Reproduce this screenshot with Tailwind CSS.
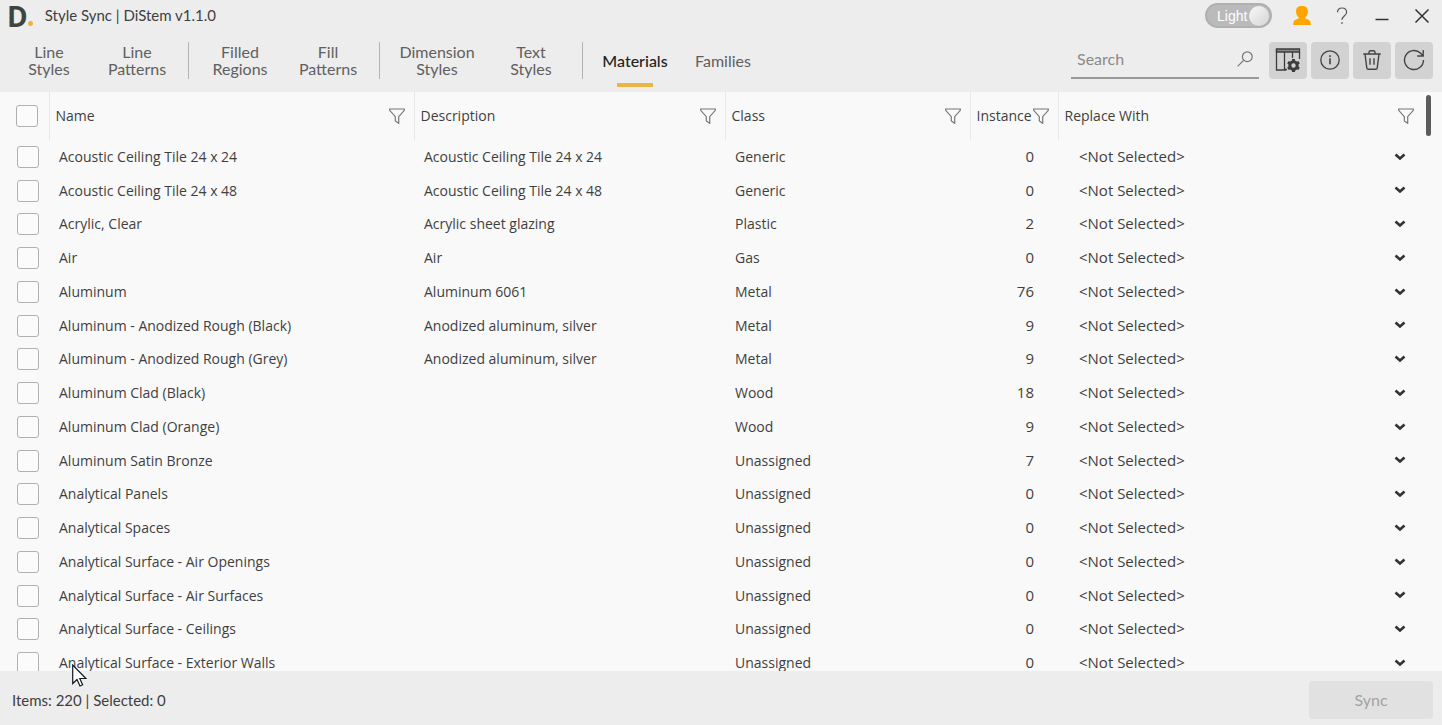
<!DOCTYPE html>
<html lang="en">
<head>
<meta charset="utf-8">
<meta name="viewport" content="width=device-width, initial-scale=1">
<title>Style Sync | DiStem v1.1.0</title>
<script src="https://cdn.jsdelivr.net/npm/@tailwindcss/browser@4"></script>
</head>
<body class="relative flex h-screen flex-col overflow-hidden bg-[#ededed] font-['Open_Sans',sans-serif] text-sm text-[#3f3f3f]">

<header class="shrink-0 pb-px font-[Lato,sans-serif]">
  <div class="flex h-[31px] items-center">
    <h1 class="flex items-center pl-[7px] text-[15px]">
      <span class="mr-3 flex items-end" aria-hidden="true">
        <span class="font-['Open_Sans',sans-serif] text-[28px] leading-10 font-bold text-[#42433d]">D</span>
        <span class="mb-2.5 size-[5px] rounded-full bg-[#eeb042]"></span>
      </span>
      Style Sync | DiStem v1.1.0
    </h1>
    <button type="button" role="switch" aria-checked="true" class="mr-2.5 ml-auto flex h-[25px] w-[67px] items-center justify-between rounded-full border-2 border-[#b0b0b0] bg-[#bababa] pr-px pl-2.5 font-['Liberation_Sans',sans-serif] text-sm text-white">
      Light<span class="size-5 rounded-full bg-linear-to-br from-[#fafafa] to-[#d4d4d4]"></span>
    </button>
    <button type="button" aria-label="Account" class="grid h-8 w-10 place-items-center">
      <svg class="h-[19px] w-[18px]" viewBox="0 0 18 19" fill="#ffa500"><path d="M9 0c3.700 0 6 1.800 6 5.300 0 2.700-1 4.500-2.600 5.900v1.300l3.100 1.300c1.700.7 2.300 2 2.300 5.200H.2c0-3.200.6-4.500 2.300-5.200l3.100-1.300v-1.300C4 9.800 3 8 3 5.300 3 1.800 5.300 0 9 0Z"/></svg>
    </button>
    <button type="button" aria-label="Help" class="grid h-8 w-10 place-items-center">
      <svg class="h-[18px] w-3" viewBox="0 0 12 18" fill="none" stroke="#555" stroke-width="1.200"><path d="M1.500 5.200C1.500 2.500 3.300 1 6 1s4.600 1.700 4.600 4.200C10.600 9 6 9 6 12.800"/><path d="M6 15.200v1.600" stroke-width="1.500"/></svg>
    </button>
    <button type="button" aria-label="Minimize" class="grid h-8 w-10 place-items-center">
      <svg class="size-4" viewBox="0 0 16 16" stroke="#333" stroke-width="1.500"><path d="M1.500 11.500h13"/></svg>
    </button>
    <button type="button" aria-label="Close" class="grid h-8 w-10 place-items-center">
      <svg class="size-4" viewBox="0 0 16 16" stroke="#333" stroke-width="1.500"><path d="m1.500 1.500 13 13M14.500 1.500l-13 13"/></svg>
    </button>
  </div>

  <div class="flex h-[60px] items-center justify-between pr-[9px] pb-0.5 pl-2.5">
    <nav class="flex h-full items-center text-base leading-[17px] text-[#606060]">
      <div class="flex gap-2.5">
        <button type="button" class="w-[78px]">Line<br>Styles</button>
        <button type="button" class="w-[78px]">Line<br>Patterns</button>
      </div>
      <span class="mx-3 h-[37px] w-px bg-[#b4b4b4]"></span>
      <div class="flex gap-2.5">
        <button type="button" class="w-[78px]">Filled<br>Regions</button>
        <button type="button" class="w-[78px]">Fill<br>Patterns</button>
      </div>
      <span class="mx-3 h-[37px] w-px bg-[#b4b4b4]"></span>
      <div class="flex gap-2.5">
        <button type="button" class="w-[90px]">Dimension<br>Styles</button>
        <button type="button" class="w-[78px]">Text<br>Styles</button>
      </div>
      <span class="mx-3 h-[37px] w-px bg-[#b4b4b4]"></span>
      <div class="flex h-full gap-2">
        <button type="button" aria-current="page" class="relative w-20 font-medium text-[#222]">Materials<span class="absolute inset-x-[22px] bottom-0.5 h-1 bg-[#ebb544]"></span></button>
        <button type="button" class="w-20">Families</button>
      </div>
    </nav>
    <div class="flex items-center gap-1">
      <label class="mr-1.5 flex h-[37px] w-[188px] items-center border-b-2 border-[#999] px-1.5">
        <input type="search" aria-label="Search" placeholder="Search" class="min-w-0 flex-1 bg-transparent text-base outline-none placeholder:text-[#8a8a8a]">
        <svg class="size-4" viewBox="0 0 16 16" fill="none" stroke="#777" stroke-width="1.200"><circle cx="10.300" cy="5.700" r="4.900"/><path d="M6.800 9.200.6 15.400"/></svg>
      </label>
      <button type="button" aria-label="Column settings" class="grid h-[37px] w-[38px] place-items-center rounded bg-[#d2d2d2]">
        <svg class="size-[26px]" viewBox="0 0 26 26" fill="none" stroke="#3c3c3c" stroke-width="1.300"><path d="M1.500 2h23v3h-23z" fill="#888"/><path d="M1.500 2v21H11M9.500 5v18M17.500 5v6M24.500 5v7M9.500 22.500H12"/><circle cx="18.500" cy="18.500" r="3.700" stroke-width="3"/><path d="M18.500 12v3M18.500 22v3M12.900 15.200l2.600 1.500M21.500 20.300l2.600 1.500M24.100 15.200l-2.600 1.500M15.500 20.300l-2.600 1.500" stroke-width="3"/></svg>
      </button>
      <button type="button" aria-label="Information" class="grid h-[37px] w-[38px] place-items-center rounded bg-[#d2d2d2]">
        <svg class="size-5" viewBox="0 0 20 20" fill="none" stroke="#444" stroke-width="1.300"><circle cx="10" cy="10" r="9.200"/><path d="M10 8.300v6M10 5.300v1.600" stroke-width="1.600"/></svg>
      </button>
      <button type="button" aria-label="Delete" class="grid h-[37px] w-[38px] place-items-center rounded bg-[#d2d2d2]">
        <svg class="h-5 w-[18px]" viewBox="0 0 18 20" fill="none" stroke="#444" stroke-width="1.400"><path d="M.3 4h17.400M2 4l1.800 14c.1.900.6 1.300 1.400 1.300h7.600c.8 0 1.300-.4 1.400-1.300L16 4M6 4V2.500C6 1.400 6.700.8 7.600.8h2.800c.9 0 1.600.6 1.600 1.700V4M7 8.200v6.500M11 8.200v6.500"/></svg>
      </button>
      <button type="button" aria-label="Refresh" class="grid h-[37px] w-[38px] place-items-center rounded bg-[#d2d2d2]">
        <svg class="size-[22px]" viewBox="0 0 22 22" fill="none" stroke="#444" stroke-width="1.400"><path d="M20.500 11a9.500 9.500 0 1 1-2.800-6.700l2 2.200M20.200 1v6h-6"/></svg>
      </button>
    </div>
  </div>
</header>

<main class="flex min-h-0 flex-1 overflow-hidden bg-[#f9f9f9]">
  <div class="min-w-0 flex-1">
    <table class="w-full table-fixed border-collapse text-left">
      <colgroup>
        <col class="w-[49px]"><col class="w-[365px]"><col class="w-[311px]"><col class="w-[245px]"><col class="w-[88px]"><col>
      </colgroup>
      <thead>
        <tr id="head" class="h-12">
          <th class="p-0 pl-4"><input type="checkbox" aria-label="Select all" class="block size-[22px] appearance-none rounded-[3px] border border-[#b0b0b0] bg-[#fbfbfb]"></th>
        </tr>
      </thead>
      <tbody id="rows" class="[&>tr]:h-[34px] [&>tr:nth-child(4n+2)]:h-[33px]"></tbody>
    </table>
  </div>
  <div class="w-[22px] shrink-0 pt-[3px] pl-1.5"><div class="h-[41px] w-[5px] rounded-full bg-[#5c5c5c]"></div></div>
</main>

<footer class="flex h-[54px] shrink-0 items-center justify-between pt-1 pr-[9px] pl-3 font-[Lato,sans-serif] text-base">
  <p class="text-[15px]">Items: 220 | Selected: 0</p>
  <button type="button" disabled class="h-[38px] w-[124px] rounded bg-[#e1e1e1] text-[#a3a3a3]">Sync</button>
</footer>

<svg class="pointer-events-none absolute top-[664px] left-[72px] h-[23px] w-[15px]" viewBox="0 0 15 23" fill="#fff" stroke="#111827" stroke-width="1.200" aria-hidden="true"><path d="M.7 1v18.500l4.300-4 3 6.500 2.600-1.200-2.800-6.300h6.100Z"/></svg>

<script>
const columns = ["Name", "Description", "Class", "Instance", "Replace With"];
const materials = [
  ["Acoustic Ceiling Tile 24 x 24", "Acoustic Ceiling Tile 24 x 24", "Generic", 0],
  ["Acoustic Ceiling Tile 24 x 48", "Acoustic Ceiling Tile 24 x 48", "Generic", 0],
  ["Acrylic, Clear", "Acrylic sheet glazing", "Plastic", 2],
  ["Air", "Air", "Gas", 0],
  ["Aluminum", "Aluminum 6061", "Metal", 76],
  ["Aluminum - Anodized Rough (Black)", "Anodized aluminum, silver", "Metal", 9],
  ["Aluminum - Anodized Rough (Grey)", "Anodized aluminum, silver", "Metal", 9],
  ["Aluminum Clad (Black)", "", "Wood", 18],
  ["Aluminum Clad (Orange)", "", "Wood", 9],
  ["Aluminum Satin Bronze", "", "Unassigned", 7],
  ["Analytical Panels", "", "Unassigned", 0],
  ["Analytical Spaces", "", "Unassigned", 0],
  ["Analytical Surface - Air Openings", "", "Unassigned", 0],
  ["Analytical Surface - Air Surfaces", "", "Unassigned", 0],
  ["Analytical Surface - Ceilings", "", "Unassigned", 0],
  ["Analytical Surface - Exterior Walls", "", "Unassigned", 0],
];
document.getElementById("head").insertAdjacentHTML("beforeend", columns.map(c => `
  <th class="border-l border-[#e8e8e8] p-0 font-normal">
    <div class="flex items-center justify-between pl-1.5 ${c === "Replace With" ? "pr-1.5" : "pr-[9px]"}">
      ${c}
      <button type="button" aria-label="Filter ${c}" class="shrink-0">
        <svg class="block size-4" viewBox="0 0 16 16" fill="none" stroke="#777" stroke-width="1.200"><path d="M.7 1h14.600v1.300L9.700 8.700v6.600L6.300 13V8.700L.7 2.300Z"/></svg>
      </button>
    </div>
  </th>`).join(""));
document.getElementById("rows").innerHTML = materials.map(([name, description, kind, count]) => `
  <tr>
    <td class="p-0 pl-[17px]"><input type="checkbox" aria-label="Select ${name}" class="block size-[22px] appearance-none rounded-[3px] border border-[#b0b0b0] bg-[#fbfbfb]"></td>
    <td class="p-0 pl-2.5">${name}</td>
    <td class="p-0 pl-2.5">${description}</td>
    <td class="p-0 pl-2.5">${kind}</td>
    <td class="p-0 pr-6 text-right text-[15px]">${count}</td>
    <td class="p-0">
      <div class="relative flex items-center">
        <select aria-label="Replace ${name} with" class="w-full appearance-none bg-transparent pl-[21px] text-[15px] outline-none"><option>&lt;Not Selected&gt;</option></select>
        <svg class="pointer-events-none absolute right-3.5 h-2 w-3" viewBox="0 0 12 8" fill="none" stroke="#333" stroke-width="2.600"><path d="m1.500 1.500 4.500 4 4.500-4"/></svg>
      </div>
    </td>
  </tr>`).join("");
</script>
</body>
</html>
